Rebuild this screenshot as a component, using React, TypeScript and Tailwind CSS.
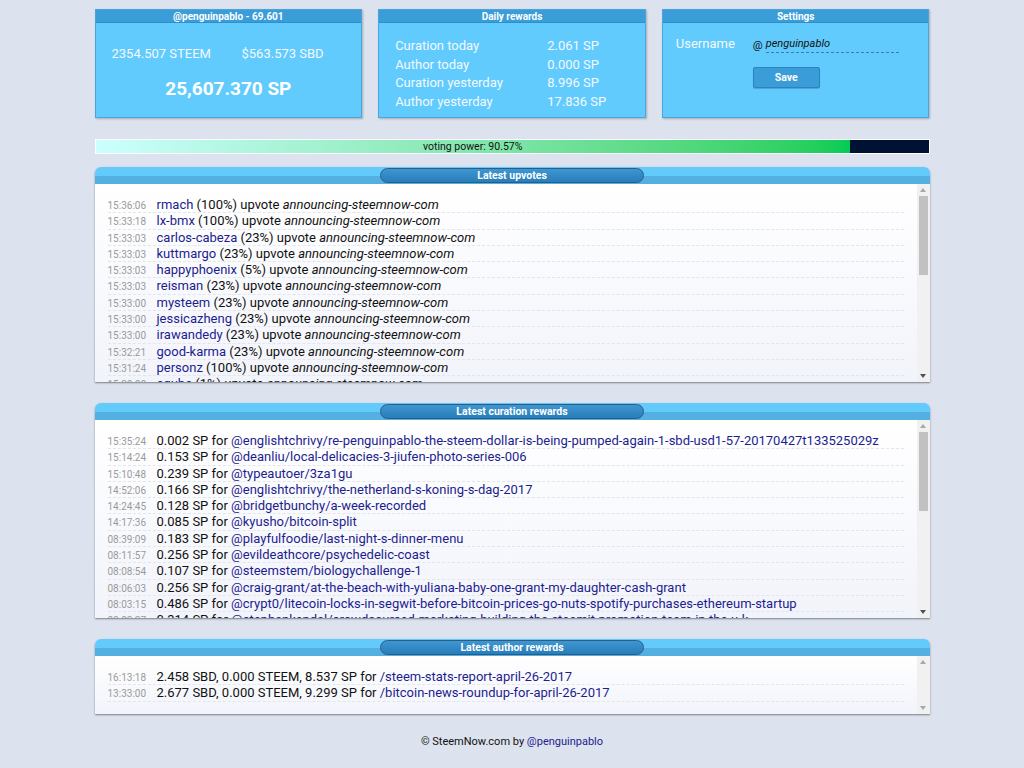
import React from "react";

const FONT = { fontFamily: "Roboto, 'Noto Sans', Arial, sans-serif" };

const upvotes: [string, string, string][] = [
  ["15:36:06", "rmach", "100%"],
  ["15:33:18", "lx-bmx", "100%"],
  ["15:33:03", "carlos-cabeza", "23%"],
  ["15:33:03", "kuttmargo", "23%"],
  ["15:33:03", "happyphoenix", "5%"],
  ["15:33:03", "reisman", "23%"],
  ["15:33:00", "mysteem", "23%"],
  ["15:33:00", "jessicazheng", "23%"],
  ["15:33:00", "irawandedy", "23%"],
  ["15:32:21", "good-karma", "23%"],
  ["15:31:24", "personz", "100%"],
  ["15:30:00", "egube", "1%"],
];

const curation: [string, string, string][] = [
  ["15:35:24", "0.002", "@englishtchrivy/re-penguinpablo-the-steem-dollar-is-being-pumped-again-1-sbd-usd1-57-20170427t133525029z"],
  ["15:14:24", "0.153", "@deanliu/local-delicacies-3-jiufen-photo-series-006"],
  ["15:10:48", "0.239", "@typeautoer/3za1gu"],
  ["14:52:06", "0.166", "@englishtchrivy/the-netherland-s-koning-s-dag-2017"],
  ["14:24:45", "0.128", "@bridgetbunchy/a-week-recorded"],
  ["14:17:36", "0.085", "@kyusho/bitcoin-split"],
  ["08:39:09", "0.183", "@playfulfoodie/last-night-s-dinner-menu"],
  ["08:11:57", "0.256", "@evildeathcore/psychedelic-coast"],
  ["08:08:54", "0.107", "@steemstem/biologychallenge-1"],
  ["08:06:03", "0.256", "@craig-grant/at-the-beach-with-yuliana-baby-one-grant-my-daughter-cash-grant"],
  ["08:03:15", "0.486", "@crypt0/litecoin-locks-in-segwit-before-bitcoin-prices-go-nuts-spotify-purchases-ethereum-startup"],
  ["08:02:27", "0.314", "@stephenkendal/crowdsourced-marketing-building-the-steemit-promotion-team-in-the-u-k"],
];

const author: [string, string, string][] = [
  ["16:13:18", "2.458 SBD, 0.000 STEEM, 8.537 SP", "/steem-stats-report-april-26-2017"],
  ["13:33:00", "2.677 SBD, 0.000 STEEM, 9.299 SP", "/bitcoin-news-roundup-for-april-26-2017"],
];

function Card({ title, children }: { title: string; children: React.ReactNode }) {
  return (
    <div className="flex flex-col h-[109px] border border-[#4aa5dc] bg-[#62cbfd] shadow-[1px_1px_2px_rgba(0,0,0,0.25)]">
      <div className="h-[13px] bg-[#3a9dd7] text-white font-bold text-[10px] leading-[13px] text-center border-b border-[#2f8fcc]">
        {title}
      </div>
      <div className="flex-1 text-[#f2f9ff]">{children}</div>
    </div>
  );
}

function Scrollbar({ thumb }: { thumb: boolean }) {
  return (
    <div className="w-[13px] bg-[#f1f1f1] flex flex-col items-center">
      <div className="h-[12px] flex items-center justify-center">
        <div className="w-0 h-0 border-l-[3px] border-r-[3px] border-b-[4px] border-l-transparent border-r-transparent border-b-[#a8a8a8]" />
      </div>
      {thumb && <div className="w-[9px] h-[79px] bg-[#c1c1c1]" />}
      <div className="flex-1" />
      <div className="h-[12px] flex items-center justify-center">
        <div className={"w-0 h-0 border-l-[3px] border-r-[3px] border-t-[4px] border-l-transparent border-r-transparent " + (thumb ? "border-t-[#505050]" : "border-t-[#a8a8a8]")} />
      </div>
    </div>
  );
}

function Panel({ title, height, thumb, children }: { title: string; height: string; thumb: boolean; children: React.ReactNode }) {
  return (
    <div className="rounded-t-[6px] shadow-[0_1px_2px_rgba(0,0,0,0.45)]">
      <div className="relative h-[17px] rounded-t-[6px] overflow-hidden">
        <div className="h-[9px] bg-[#63cbfb]" />
        <div className="h-[8px] bg-[#54b0e1]" />
        <div className="absolute left-1/2 -translate-x-1/2 top-[1px] w-[264px] h-[15px] rounded-full border border-[#2a5d85] bg-gradient-to-b from-[#3d97d2] to-[#2a7db9] text-white font-bold text-[10.5px] leading-[13px] text-center">
          {title}
        </div>
      </div>
      <div className={"flex bg-gradient-to-b from-white to-[#f2f4fb] " + height}>
        <div className="flex-1 overflow-hidden pl-[13px] pr-[13px] pt-[13px]">{children}</div>
        <Scrollbar thumb={thumb} />
      </div>
    </div>
  );
}

function Row({ time, children }: { time: string; children: React.ReactNode }) {
  return (
    <div className="flex items-baseline h-[16.3px] border-b border-dashed border-[#e3e5ea] text-[13px] leading-[15px] whitespace-nowrap text-[#111]">
      <span className="shrink-0 w-[49px] text-[10px] text-[#9a9a9a]">{time}</span>
      <span>{children}</span>
    </div>
  );
}

const LINK = "text-[#1d1d8f]";

export default function App() {
  return (
    <div className="min-h-[768px] bg-[#dde3ee]" style={FONT}>
      <div className="w-[835px] mx-auto pt-[9px]">
        <div className="grid grid-cols-3 gap-[16px]">
          <Card title="@penguinpablo - 69.601">
            <div className="flex pl-[16px] pt-[22px] text-[13px] leading-[17px]">
              <span className="w-[130px]">2354.507 STEEM</span>
              <span>$563.573 SBD</span>
            </div>
            <div className="text-center text-white font-bold text-[19px] leading-[24px] mt-[15px]">25,607.370 SP</div>
          </Card>
          <Card title="Daily rewards">
            <div className="pl-[16px] pt-[14px] text-[13px] leading-[18.7px]">
              {[
                ["Curation today", "2.061 SP"],
                ["Author today", "0.000 SP"],
                ["Curation yesterday", "8.996 SP"],
                ["Author yesterday", "17.836 SP"],
              ].map(([a, b]) => (
                <div key={a} className="flex">
                  <span className="w-[152px]">{a}</span>
                  <span>{b}</span>
                </div>
              ))}
            </div>
          </Card>
          <Card title="Settings">
            <div className="flex items-start pl-[13px] pt-[12px]">
              <span className="w-[77px] text-[13px] leading-[17px]">Username</span>
              <div className="flex flex-col">
                <div className="w-[146px] flex items-end text-[11px] leading-[14px] text-[#111] pt-[2px]">
                  <span className="mr-[3px]">@</span>
                  <span className="italic flex-1 border-b border-dashed border-[#3a7db5] pb-[1px]">penguinpablo</span>
                </div>
                <button className="mt-[14px] w-[67px] h-[21px] bg-[#3a9dd7] border border-[#2a83c4] rounded-[2px] text-white font-bold text-[10.5px] shadow-[0_1px_1px_rgba(0,0,0,0.2)]">
                  Save
                </button>
              </div>
            </div>
          </Card>
        </div>

        <div className="mt-[21px] h-[15px] bg-[#001233] border border-white flex">
          <div className="h-full bg-gradient-to-r from-[#ccffff] to-[#00cc55] text-center text-[10.5px] leading-[13px] text-[#111]" style={{ width: "90.57%" }}>
            voting power: 90.57%
          </div>
        </div>

        <div className="mt-[13px]">
          <Panel title="Latest upvotes" height="h-[198px]" thumb>
            {upvotes.map(([t, n, p], i) => (
              <Row key={i} time={t}>
                <span className={LINK}>{n}</span> ({p}) upvote <i>announcing-steemnow-com</i>
              </Row>
            ))}
          </Panel>
        </div>

        <div className="mt-[21px]">
          <Panel title="Latest curation rewards" height="h-[198px]" thumb>
            {curation.map(([t, v, l], i) => (
              <Row key={i} time={t}>
                {v} SP for <span className={LINK}>{l}</span>
              </Row>
            ))}
          </Panel>
        </div>

        <div className="mt-[21px]">
          <Panel title="Latest author rewards" height="h-[58px]" thumb={false}>
            {author.map(([t, v, l], i) => (
              <Row key={i} time={t}>
                {v} for <span className={LINK}>{l}</span>
              </Row>
            ))}
          </Panel>
        </div>

        <div className="text-center text-[11px] text-[#111] mt-[20px] pb-[20px]">
          © SteemNow.com by <span className={LINK}>@penguinpablo</span>
        </div>
      </div>
    </div>
  );
}
